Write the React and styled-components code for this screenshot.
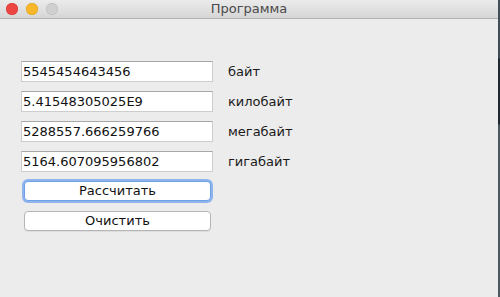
import React from "react";
import styled, { createGlobalStyle } from "styled-components";

const Global = createGlobalStyle`
  html, body { margin: 0; padding: 0; }
  body { width: 500px; height: 297px; overflow: hidden; background: #ececec; }
`;

const Screen = styled.div`
  display: flex;
  width: 500px;
  height: 297px;
  font-family: "DejaVu Sans", "Liberation Sans", sans-serif;
`;

const Window = styled.div`
  flex: 1;
  display: flex;
  flex-direction: column;
  background: #ececec;
`;

const Edge = styled.div`
  width: 2px;
  background: linear-gradient(
    to bottom,
    #41505b 0px,
    #3c4b56 58px,
    #1d2831 59px,
    #1d2831 124px,
    #4a5862 125px,
    #4a5862 297px
  );
`;

const TitleBar = styled.div`
  height: 18px;
  display: flex;
  align-items: center;
  position: relative;
  background: linear-gradient(to bottom, #ebebeb, #d6d6d6);
  border-bottom: 1px solid #b3b3b3;
`;

const Lights = styled.div`
  display: flex;
  gap: 8px;
  padding-left: 6px;
`;

const Light = styled.span`
  width: 12px;
  height: 12px;
  border-radius: 50%;
  background: ${(p) => p.$c};
  box-shadow: inset 0 0 0 0.5px ${(p) => p.$b};
`;

const Title = styled.div`
  position: absolute;
  left: 0;
  right: 0;
  top: 0;
  height: 18px;
  line-height: 18px;
  text-align: center;
  font-size: 13px;
  color: #4a4a4a;
  pointer-events: none;
`;

const Form = styled.div`
  display: flex;
  flex-direction: column;
  padding: 42px 0 0 21px;
`;

const Rows = styled.div`
  display: flex;
  flex-direction: column;
  gap: 9px;
`;

const Row = styled.div`
  display: flex;
  align-items: center;
  gap: 15px;
`;

const Field = styled.div`
  box-sizing: border-box;
  width: 192px;
  height: 21px;
  background: #fff;
  border: 1px solid #cdcdcd;
  border-top-color: #a8a8a8;
  padding: 0 1px;
  font-size: 13px;
  line-height: 19px;
  color: #111;
  white-space: nowrap;
  overflow: hidden;
`;

const Label = styled.span`
  font-size: 13px;
  color: #1a1a1a;
`;

const Buttons = styled.div`
  display: flex;
  flex-direction: column;
  gap: 10px;
  margin: 9px 0 0 3px;
  width: 187px;
`;

const Button = styled.button`
  box-sizing: border-box;
  height: 20px;
  padding: 0;
  border-radius: 4px;
  background: #fff;
  border: 1px solid ${(p) => (p.$focused ? "#6f9fe4" : "#b5b5b5")};
  box-shadow: ${(p) =>
    p.$focused ? "0 0 0 2px #8db4ec" : "0 1px 0 rgba(0,0,0,0.06)"};
  font-family: "DejaVu Sans", "Liberation Sans", sans-serif;
  font-size: 13px;
  color: #111;
  line-height: 18px;
`;

const rows = [
  ["5545454643456", "байт"],
  ["5.41548305025E9", "килобайт"],
  ["5288557.666259766", "мегабайт"],
  ["5164.607095956802", "гигабайт"],
];

export default function App() {
  return (
    <>
      <Global />
      <Screen>
        <Window>
          <TitleBar>
            <Lights>
              <Light $c="#ec4542" $b="#d23a37" />
              <Light $c="#f8b62a" $b="#dc9e20" />
              <Light $c="#cfcfcf" $b="#b9b9b9" />
            </Lights>
            <Title>Программа</Title>
          </TitleBar>
          <Form>
            <Rows>
              {rows.map(([v, l]) => (
                <Row key={l}>
                  <Field>{v}</Field>
                  <Label>{l}</Label>
                </Row>
              ))}
            </Rows>
            <Buttons>
              <Button $focused>Рассчитать</Button>
              <Button>Очистить</Button>
            </Buttons>
          </Form>
        </Window>
        <Edge />
      </Screen>
    </>
  );
}
